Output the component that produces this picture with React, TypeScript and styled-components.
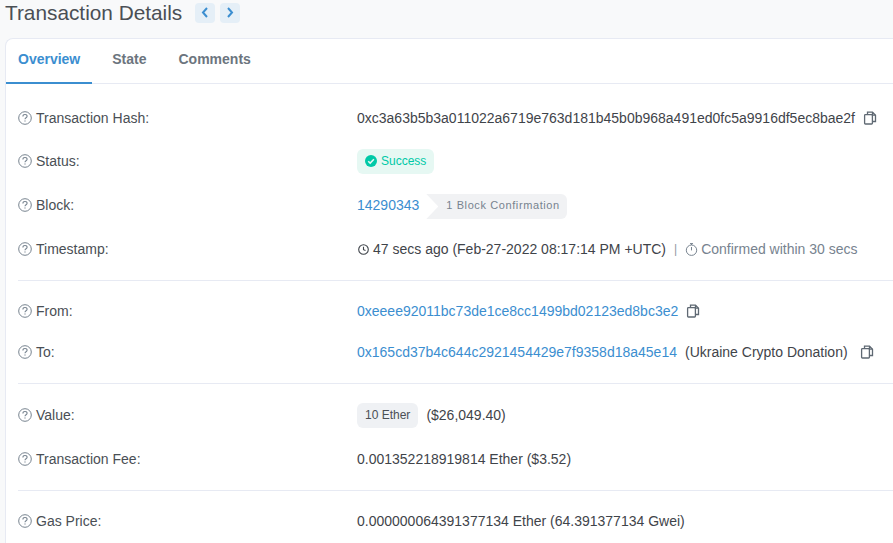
import { createGlobalStyle, styled } from "styled-components";

const GlobalStyle = createGlobalStyle`
  html, body {
    margin: 0;
    height: 543px;
    overflow: hidden;
    background: #f8f9fa;
  }
  body {
    font-family: "Liberation Sans", Arial, sans-serif;
    font-size: 14px;
    color: #4a4f55;
  }
`;

const Page = styled.div`
  padding: 0 0 0 5px;
  height: 543px;
  overflow: hidden;
`;

const Header = styled.div`
  display: flex;
  align-items: center;
  height: 25px;
  margin-bottom: 13px;
`;

const Title = styled.h1`
  margin: 0 13px 0 0;
  font-size: 20.8px;
  font-weight: 400;
  line-height: 25px;
  color: #4a4f55;
`;

const NavButton = styled.span`
  display: flex;
  align-items: center;
  justify-content: center;
  width: 20px;
  height: 20px;
  margin-right: 5px;
  border-radius: 4px;
  background: #e5eff7;
  color: #3b8ed0;
`;

const Card = styled.div`
  background: #fff;
  border: 1px solid #e7eaf3;
  border-right: none;
  border-bottom: none;
  border-radius: 8px 0 0 0;
  min-height: 520px;
`;

const Tabs = styled.div`
  display: flex;
  height: 44px;
  border-bottom: 1px solid #e7eaf3;
`;

const Tab = styled.div<{ $active?: boolean }>`
  box-sizing: border-box;
  height: 45px;
  padding: 12px 12px 0;
  margin-right: 8px;
  font-size: 14px;
  font-weight: 700;
  color: ${(p) => (p.$active ? "#3b8ed0" : "#6c757e")};
  border-bottom: 2px solid ${(p) => (p.$active ? "#3b8ed0" : "transparent")};
`;

const Body = styled.div`
  padding: 12px 0 0 12px;
`;

const Row = styled.div<{ $height: number }>`
  display: flex;
  align-items: center;
  height: ${(p) => p.$height}px;
`;

const Label = styled.div`
  display: flex;
  align-items: center;
  width: 339px;
  flex-shrink: 0;
  color: #4a4f55;
`;

const HelpIcon = styled.svg`
  width: 14px;
  height: 14px;
  margin-right: 4px;
  color: #77838f;
  flex-shrink: 0;
`;

const Value = styled.div`
  display: flex;
  align-items: center;
  white-space: nowrap;
  color: #3f444a;
`;

const Link = styled.span`
  color: #3b8ed0;
`;

const Muted = styled.span`
  color: #77838f;
`;

const CopyIcon = styled.svg<{ $gap: number }>`
  width: 14px;
  height: 14px;
  margin-left: ${(p) => p.$gap}px;
  color: #5f6973;
`;

const StatusBadge = styled.span`
  display: flex;
  align-items: center;
  height: 25px;
  padding: 0 8px;
  border-radius: 6px;
  background: #e6f8f3;
  color: #00c9a7;
  font-size: 12px;
`;

const CheckIcon = styled.svg`
  width: 12px;
  height: 12px;
  margin-right: 4px;
`;

const Confirmation = styled.span`
  display: flex;
  height: 25px;
  margin: 4px 0 0 7px;
  font-size: 11px;
  letter-spacing: 0.6px;
  color: #77838f;
  &::before {
    content: "";
    width: 12px;
    background: #f1f2f4;
    clip-path: polygon(0 0, 100% 0, 100% 100%, 0 100%, 100% 50%);
  }
`;

const ConfirmationText = styled.span`
  display: flex;
  align-items: center;
  padding: 0 7px 3px 8px;
  background: #f1f2f4;
  border-radius: 0 6px 6px 0;
`;

const ClockIcon = styled.svg`
  width: 11px;
  height: 11px;
  margin: 0 4px 0 1px;
  color: #3f444a;
`;

const Separator = styled.span`
  margin: 0 8px;
  font-size: 12px;
  color: #8f99a3;
`;

const TimerIcon = styled.svg`
  width: 13px;
  height: 13px;
  margin-right: 3px;
  color: #77838f;
`;

const EtherBadge = styled.span`
  display: flex;
  align-items: center;
  height: 25px;
  padding: 0 8px;
  margin-right: 8px;
  border-radius: 6px;
  background: #eff1f4;
  font-size: 12px;
  color: #4a4f55;
`;

const Spaced = styled.span`
  margin-left: 8px;
`;

const Divider = styled.hr<{ $before: number; $after: number }>`
  border: none;
  border-top: 1px solid #e7eaf3;
  margin: ${(p) => p.$before}px 0 ${(p) => p.$after}px;
`;

function Help() {
  return (
    <HelpIcon viewBox="0 0 14 14" fill="none" stroke="currentColor">
      <circle cx="7" cy="7" r="6.3" strokeWidth="1" />
      <path d="M4.9 5.4c0-1.2 1-1.9 2.1-1.9s2.1.7 2.1 1.8c0 1.5-2.1 1.5-2.1 3" strokeWidth="1.1" />
      <path d="M7 9.4v1.2" strokeWidth="1.2" />
    </HelpIcon>
  );
}

function Copy({ gap }: { gap: number }) {
  return (
    <CopyIcon $gap={gap} viewBox="0 0 14 14" fill="none" stroke="currentColor" strokeWidth="1.3">
      <path d="M4.5 3.5V1.2h5l3 3V10.5H9.5" />
      <path d="M9.5 1.2v3h3" />
      <rect x="1.6" y="3.6" width="7.8" height="9.4" rx="0.8" />
    </CopyIcon>
  );
}

function Chevron({ dir }: { dir: "left" | "right" }) {
  return (
    <svg width="8" height="11" viewBox="0 0 8 11" fill="none" stroke="currentColor" strokeWidth="2">
      <path d={dir === "left" ? "M6 1 2 5.5 6 10" : "M2 1 6 5.5 2 10"} />
    </svg>
  );
}

export default function App() {
  return (
    <Page>
      <GlobalStyle />
      <Header>
        <Title>Transaction Details</Title>
        <NavButton>
          <Chevron dir="left" />
        </NavButton>
        <NavButton>
          <Chevron dir="right" />
        </NavButton>
      </Header>
      <Card>
        <Tabs>
          <Tab $active>Overview</Tab>
          <Tab>State</Tab>
          <Tab>Comments</Tab>
        </Tabs>
        <Body>
          <Row $height={44}>
            <Label>
              <Help />
              Transaction Hash:
            </Label>
            <Value>
              0xc3a63b5b3a011022a6719e763d181b45b0b968a491ed0fc5a9916df5ec8bae2f
              <Copy gap={8} />
            </Value>
          </Row>
          <Row $height={42}>
            <Label>
              <Help />
              Status:
            </Label>
            <Value>
              <StatusBadge>
                <CheckIcon viewBox="0 0 12 12">
                  <circle cx="6" cy="6" r="6" fill="currentColor" />
                  <path d="M3.2 6.2 5.2 8.1 8.9 4.3" fill="none" stroke="#e6f8f3" strokeWidth="1.5" />
                </CheckIcon>
                Success
              </StatusBadge>
            </Value>
          </Row>
          <Row $height={45}>
            <Label>
              <Help />
              Block:
            </Label>
            <Value>
              <Link>14290343</Link>
              <Confirmation>
                <ConfirmationText>1 Block Confirmation</ConfirmationText>
              </Confirmation>
            </Value>
          </Row>
          <Row $height={44}>
            <Label>
              <Help />
              Timestamp:
            </Label>
            <Value>
              <ClockIcon viewBox="0 0 11 11" fill="none" stroke="currentColor" strokeWidth="1.1">
                <circle cx="5.5" cy="5.5" r="4.8" />
                <path d="M5.5 2.8v2.9l2 .9" />
              </ClockIcon>
              47 secs ago (Feb-27-2022 08:17:14 PM +UTC)
              <Separator>|</Separator>
              <TimerIcon viewBox="0 0 13 13" fill="none" stroke="currentColor" strokeWidth="1">
                <circle cx="6.5" cy="7.2" r="5.2" />
                <path d="M5 .6h3M6.5 .6v1.4M6.5 4v3.4" />
              </TimerIcon>
              <Muted>Confirmed within 30 secs</Muted>
            </Value>
          </Row>
          <Divider $before={9} $after={8} />
          <Row $height={44}>
            <Label>
              <Help />
              From:
            </Label>
            <Value>
              <Link>0xeeee92011bc73de1ce8cc1499bd02123ed8bc3e2</Link>
              <Copy gap={8} />
            </Value>
          </Row>
          <Row $height={38}>
            <Label>
              <Help />
              To:
            </Label>
            <Value>
              <Link>0x165cd37b4c644c2921454429e7f9358d18a45e14</Link>
              <Spaced>(Ukraine Crypto Donation)</Spaced>
              <Copy gap={12} />
            </Value>
          </Row>
          <Divider $before={12} $after={9} />
          <Row $height={44}>
            <Label>
              <Help />
              Value:
            </Label>
            <Value>
              <EtherBadge>10 Ether</EtherBadge>
              ($26,049.40)
            </Value>
          </Row>
          <Row $height={44}>
            <Label>
              <Help />
              Transaction Fee:
            </Label>
            <Value>0.001352218919814 Ether ($3.52)</Value>
          </Row>
          <Divider $before={9} $after={8} />
          <Row $height={44}>
            <Label>
              <Help />
              Gas Price:
            </Label>
            <Value>0.000000064391377134 Ether (64.391377134 Gwei)</Value>
          </Row>
        </Body>
      </Card>
    </Page>
  );
}
